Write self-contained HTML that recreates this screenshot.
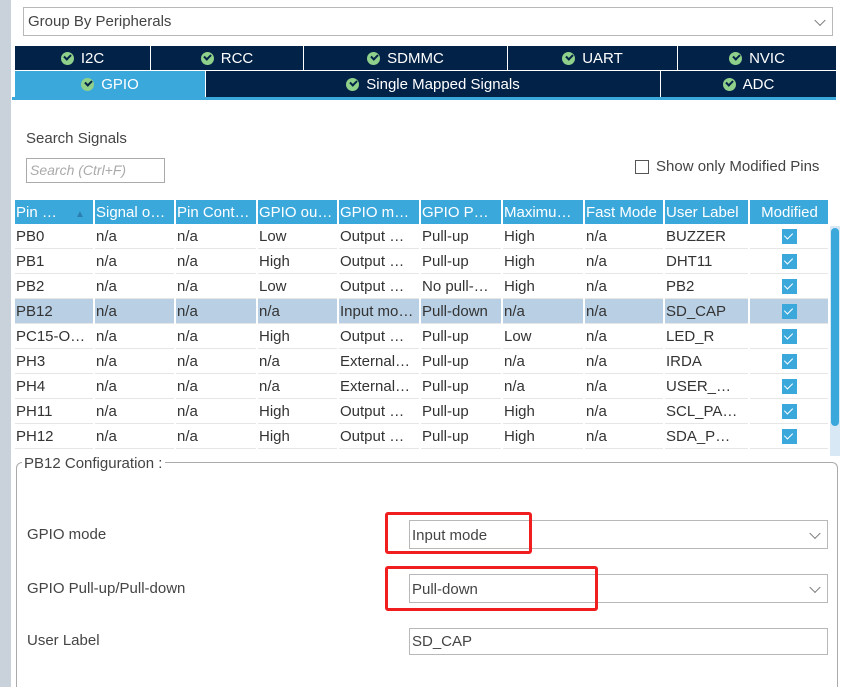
<!DOCTYPE html>
<html style="width:841px;height:687px;overflow:hidden;"><head><style>
body{margin:0;width:841px;height:687px;background:#fff;position:relative;overflow:hidden;font-family:"Liberation Sans",sans-serif;color:#333;}
.a{position:absolute;}
.strip{left:0;top:0;width:11px;height:687px;background:#c9d1da;}
.dd{border:1px solid #b8b8b8;background:#fff;box-sizing:border-box;font-size:15px;color:#444;}
.chev{position:absolute;right:8px;top:50%;width:7px;height:7px;border-right:1.3px solid #777;border-bottom:1.3px solid #777;transform:translateY(-70%) rotate(45deg);}
.tab{position:absolute;background:#032248;color:#fff;font-size:15px;display:flex;align-items:center;justify-content:center;box-sizing:border-box;}
.ic{display:inline-block;width:13px;height:13px;border-radius:50%;background:#8fd08a;margin-right:7px;position:relative;}
.ic:after{content:"";position:absolute;left:3.5px;top:2.5px;width:5px;height:3px;border-left:2px solid #032248;border-bottom:2px solid #032248;transform:rotate(-45deg);}
table{position:absolute;left:13px;top:200px;border-collapse:separate;border-spacing:2px 0;font-size:15px;table-layout:fixed;}
td,th{height:25px;padding:0 0 0 1px;white-space:nowrap;overflow:hidden;box-sizing:border-box;border-bottom:1px solid #e6e6e6;text-align:left;font-weight:normal;}
th{background:#3ba8dc;color:#fff;height:24px;border:none;}
tr.sel td{background:#b8cfe4;}
.cb{display:inline-block;width:15px;height:15px;background:#3ba8dc;position:relative;vertical-align:middle;}
.cb:after{content:"";position:absolute;left:4px;top:2px;width:4px;height:7px;border-right:1.6px solid #fff;border-bottom:1.6px solid #fff;transform:rotate(45deg);}
.lbl{font-size:15px;color:#444;}
.red{border:3px solid #f01e1e;border-radius:3px;box-sizing:border-box;}
</style></head><body>
<div class="a strip"></div>
<div class="a dd" style="left:23px;top:7px;width:810px;height:29px;padding:5px 4px;">Group By Peripherals<span class="chev"></span></div>

<div class="tab" style="left:15px;top:46px;width:135px;height:24px;"><span class="ic"></span>I2C</div>
<div class="tab" style="left:151px;top:46px;width:152px;height:24px;"><span class="ic"></span>RCC</div>
<div class="tab" style="left:304px;top:46px;width:203px;height:24px;"><span class="ic"></span>SDMMC</div>
<div class="tab" style="left:508px;top:46px;width:169px;height:24px;"><span class="ic"></span>UART</div>
<div class="tab" style="left:678px;top:46px;width:158px;height:24px;"><span class="ic"></span>NVIC</div>
<div class="tab" style="left:15px;top:71px;width:190px;height:26px;background:#3ba8dc;"><span class="ic"></span>GPIO</div>
<div class="tab" style="left:206px;top:71px;width:454px;height:26px;"><span class="ic"></span>Single Mapped Signals</div>
<div class="tab" style="left:661px;top:71px;width:175px;height:26px;"><span class="ic"></span>ADC</div>
<div class="a" style="left:12px;top:97px;width:824px;height:3px;background:#3ba8dc;"></div>

<div class="a lbl" style="left:26px;top:130px;">Search Signals</div>
<div class="a" style="left:26px;top:158px;width:139px;height:25px;border:1px solid #aaa;box-sizing:border-box;font-size:14px;font-style:italic;color:#aaa;padding:3px 3px;">Search (Ctrl+F)</div>
<div class="a" style="left:635px;top:160px;width:14px;height:14px;border:1px solid #555;box-sizing:border-box;"></div>
<div class="a lbl" style="left:656px;top:158px;">Show only Modified Pins</div>

<table>
<colgroup><col style="width:78px"><col style="width:79px"><col style="width:80px"><col style="width:79px"><col style="width:80px"><col style="width:80px"><col style="width:80px"><col style="width:78px"><col style="width:83px"><col style="width:78px"></colgroup>
<tr><th>Pin … <span style="color:#2b7fb0;font-size:10px;margin-left:14px">▲</span></th><th>Signal o…</th><th>Pin Cont…</th><th>GPIO ou…</th><th>GPIO m…</th><th>GPIO P…</th><th>Maximu…</th><th>Fast Mode</th><th>User Label</th><th style="text-align:center">Modified</th></tr>
<tr><td>PB0</td><td>n/a</td><td>n/a</td><td>Low</td><td>Output …</td><td>Pull-up</td><td>High</td><td>n/a</td><td>BUZZER</td><td style="text-align:center"><span class="cb"></span></td></tr>
<tr><td>PB1</td><td>n/a</td><td>n/a</td><td>High</td><td>Output …</td><td>Pull-up</td><td>High</td><td>n/a</td><td>DHT11</td><td style="text-align:center"><span class="cb"></span></td></tr>
<tr><td>PB2</td><td>n/a</td><td>n/a</td><td>Low</td><td>Output …</td><td>No pull-…</td><td>High</td><td>n/a</td><td>PB2</td><td style="text-align:center"><span class="cb"></span></td></tr>
<tr class="sel"><td>PB12</td><td>n/a</td><td>n/a</td><td>n/a</td><td>Input mo…</td><td>Pull-down</td><td>n/a</td><td>n/a</td><td>SD_CAP</td><td style="text-align:center"><span class="cb"></span></td></tr>
<tr><td>PC15-O…</td><td>n/a</td><td>n/a</td><td>High</td><td>Output …</td><td>Pull-up</td><td>Low</td><td>n/a</td><td>LED_R</td><td style="text-align:center"><span class="cb"></span></td></tr>
<tr><td>PH3</td><td>n/a</td><td>n/a</td><td>n/a</td><td>External…</td><td>Pull-up</td><td>n/a</td><td>n/a</td><td>IRDA</td><td style="text-align:center"><span class="cb"></span></td></tr>
<tr><td>PH4</td><td>n/a</td><td>n/a</td><td>n/a</td><td>External…</td><td>Pull-up</td><td>n/a</td><td>n/a</td><td>USER_…</td><td style="text-align:center"><span class="cb"></span></td></tr>
<tr><td>PH11</td><td>n/a</td><td>n/a</td><td>High</td><td>Output …</td><td>Pull-up</td><td>High</td><td>n/a</td><td>SCL_PA…</td><td style="text-align:center"><span class="cb"></span></td></tr>
<tr><td>PH12</td><td>n/a</td><td>n/a</td><td>High</td><td>Output …</td><td>Pull-up</td><td>High</td><td>n/a</td><td>SDA_P…</td><td style="text-align:center"><span class="cb"></span></td></tr>
</table>
<div class="a" style="left:830px;top:226px;width:10px;height:230px;background:#d8e8f4;"></div>
<div class="a" style="left:831px;top:228px;width:8px;height:198px;background:#3ba8dc;border-radius:4px;"></div>

<div class="a" style="left:16px;top:462px;width:822px;height:225px;border:1px solid #aaa;border-bottom:none;border-radius:6px 6px 0 0;box-sizing:border-box;"></div>
<div class="a lbl" style="left:22px;top:455px;background:#fff;padding:0 3px 0 2px;">PB12 Configuration :</div>

<div class="a lbl" style="left:27px;top:526px;">GPIO mode</div>
<div class="a dd" style="left:409px;top:520px;width:419px;height:29px;padding:6px 2px;">Input mode<span class="chev"></span></div>
<div class="a red" style="left:385px;top:512px;width:147px;height:42px;"></div>

<div class="a lbl" style="left:27px;top:580px;">GPIO Pull-up/Pull-down</div>
<div class="a dd" style="left:409px;top:574px;width:419px;height:29px;padding:6px 2px;">Pull-down<span class="chev"></span></div>
<div class="a red" style="left:385px;top:566px;width:213px;height:45px;"></div>

<div class="a lbl" style="left:27px;top:632px;">User Label</div>
<div class="a dd" style="left:409px;top:628px;width:419px;height:27px;padding:4px 2px;">SD_CAP</div>
</body></html>
